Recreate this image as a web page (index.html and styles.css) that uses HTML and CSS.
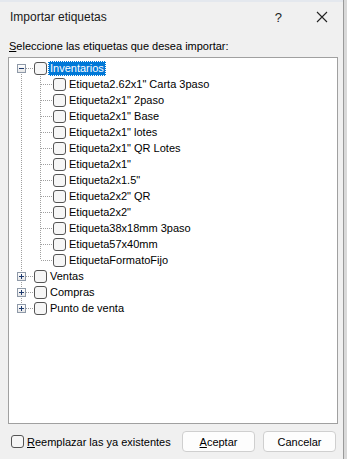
FILE: index.html
```html
<!DOCTYPE html>
<html lang="es">
<head>
  <meta charset="UTF-8" />
  <title>Importar etiquetas</title>
  <link rel="stylesheet" href="styles.css">
</head>
<body>
  <div class="dialog">
    <div class="titlebar">
      <span class="title">Importar etiquetas</span>
      <span class="help">?</span>
      <svg class="close" width="12" height="12" viewBox="0 0 12 12">
        <path d="M1 1 L11 11 M11 1 L1 11" stroke="#222" stroke-width="1.1" fill="none"/>
      </svg>
    </div>

    <div class="prompt"><u>S</u>eleccione las etiquetas que desea importar:</div>

    <div class="tree">
      <div class="root-group">
        <div class="row root first">
          <span class="expander minus"></span><span class="hline"></span><span class="check"></span><span class="label selected">Inventarios</span>
        </div>
        <div class="children">
          <div class="row child"><span class="guide"></span><span class="check"></span><span class="label">Etiqueta2.62x1" Carta 3paso</span></div>
          <div class="row child"><span class="guide"></span><span class="check"></span><span class="label">Etiqueta2x1" 2paso</span></div>
          <div class="row child"><span class="guide"></span><span class="check"></span><span class="label">Etiqueta2x1" Base</span></div>
          <div class="row child"><span class="guide"></span><span class="check"></span><span class="label">Etiqueta2x1" lotes</span></div>
          <div class="row child"><span class="guide"></span><span class="check"></span><span class="label">Etiqueta2x1" QR Lotes</span></div>
          <div class="row child"><span class="guide"></span><span class="check"></span><span class="label">Etiqueta2x1"</span></div>
          <div class="row child"><span class="guide"></span><span class="check"></span><span class="label">Etiqueta2x1.5"</span></div>
          <div class="row child"><span class="guide"></span><span class="check"></span><span class="label">Etiqueta2x2" QR</span></div>
          <div class="row child"><span class="guide"></span><span class="check"></span><span class="label">Etiqueta2x2"</span></div>
          <div class="row child"><span class="guide"></span><span class="check"></span><span class="label">Etiqueta38x18mm 3paso</span></div>
          <div class="row child"><span class="guide"></span><span class="check"></span><span class="label">Etiqueta57x40mm</span></div>
          <div class="row child last"><span class="guide"></span><span class="check"></span><span class="label">EtiquetaFormatoFijo</span></div>
        </div>
        <div class="row root"><span class="expander plus"></span><span class="hline"></span><span class="check"></span><span class="label">Ventas</span></div>
        <div class="row root"><span class="expander plus"></span><span class="hline"></span><span class="check"></span><span class="label">Compras</span></div>
        <div class="row root last"><span class="expander plus"></span><span class="hline"></span><span class="check"></span><span class="label">Punto de venta</span></div>
      </div>
    </div>

    <div class="footer">
      <label class="replace"><span class="check"></span><span><u>R</u>eemplazar las ya existentes</span></label>
      <div class="buttons">
        <button type="button" class="btn"><u>A</u>ceptar</button>
        <button type="button" class="btn">Cancelar</button>
      </div>
    </div>
  </div>
</body>
</html>
```

FILE: styles.css
```css
body {
  margin: 0;
  background: #d9d9d9;
  font-family: "Liberation Sans", Arial, sans-serif;
  font-size: 11px;
  color: #000;
}
.dialog {
  width: 343px;
  height: 459px;
  background: #f0f0f0;
  border-right: 1px solid #9a9a9a;
  display: flex;
  flex-direction: column;
}
.titlebar {
  height: 32px;
  display: flex;
  align-items: center;
  padding-left: 10px;
  border-top: 2px solid #e4e8ee;
  box-sizing: border-box;
}
.title {
  flex: 1;
  font-size: 12px;
  color: #1a1a1a;
}
.help {
  margin-right: 34px;
  font-size: 13px;
  color: #222;
}
.close {
  margin-right: 15px;
}
.prompt {
  margin: 7px 0 0 9px;
  line-height: 15px;
}
.tree {
  margin: 3px 0 0 8px;
  width: 330px;
  height: 367px;
  box-sizing: border-box;
  background: #fff;
  border: 1px solid #a0a0a0;
  padding-top: 2px;
  font-size: 11px;
}
.root-group {
  margin-left: 12px;
  background-image: repeating-linear-gradient(to bottom, #a0a0a0 0 1px, transparent 1px 2px);
  background-size: 1px 240px;
  background-position: 0 8px;
  background-repeat: no-repeat;
}
.row {
  height: 16px;
  display: flex;
  align-items: center;
}
.root {
  margin-left: -4px;
}
.expander {
  width: 9px;
  height: 9px;
  box-sizing: border-box;
  border: 1px solid #8e99a8;
  background: linear-gradient(#fff, #e6e6e6);
  position: relative;
  flex-shrink: 0;
}
.expander::before,
.expander::after {
  content: "";
  position: absolute;
  background: #1e3a6e;
}
.expander::before {
  left: 1px;
  top: 3px;
  width: 5px;
  height: 1px;
}
.plus::after {
  left: 3px;
  top: 1px;
  width: 1px;
  height: 5px;
}
.hline {
  width: 8px;
  height: 1px;
  background-image: repeating-linear-gradient(to right, #a0a0a0 0 1px, transparent 1px 2px);
}
.check {
  width: 13px;
  height: 13px;
  box-sizing: border-box;
  border: 1px solid #555;
  border-radius: 3px;
  background: #f6f6f6;
  flex-shrink: 0;
}
.label {
  margin-left: 1px;
  padding: 1px 2px;
  line-height: 13px;
  white-space: nowrap;
}
.selected {
  background: #0078d7;
  color: #fff;
  outline: 1px dotted #fff;
  outline-offset: -1px;
}
.children {
  margin-left: 19px;
}
.guide {
  width: 13px;
  height: 16px;
  flex-shrink: 0;
  background-image:
    repeating-linear-gradient(to bottom, #a0a0a0 0 1px, transparent 1px 2px),
    repeating-linear-gradient(to right, #a0a0a0 0 1px, transparent 1px 2px);
  background-size: 1px 16px, 12px 1px;
  background-position: 0 0, 1px 8px;
  background-repeat: no-repeat;
}
.last .guide {
  background-size: 1px 8px, 12px 1px;
}
.footer {
  display: flex;
  align-items: center;
  padding: 7px 7px 0 11px;
}
.replace {
  flex: 1;
  display: flex;
  align-items: center;
  gap: 3px;
  white-space: nowrap;
}
.buttons {
  display: flex;
  gap: 8px;
  flex-shrink: 0;
}
.btn {
  width: 73px;
  height: 21px;
  font-family: "Liberation Sans", Arial, sans-serif;
  font-size: 11px;
  color: #000;
  background: #fdfdfd;
  border: 1px solid #cfcfcf;
  border-radius: 4px;
  padding: 0;
}
```
